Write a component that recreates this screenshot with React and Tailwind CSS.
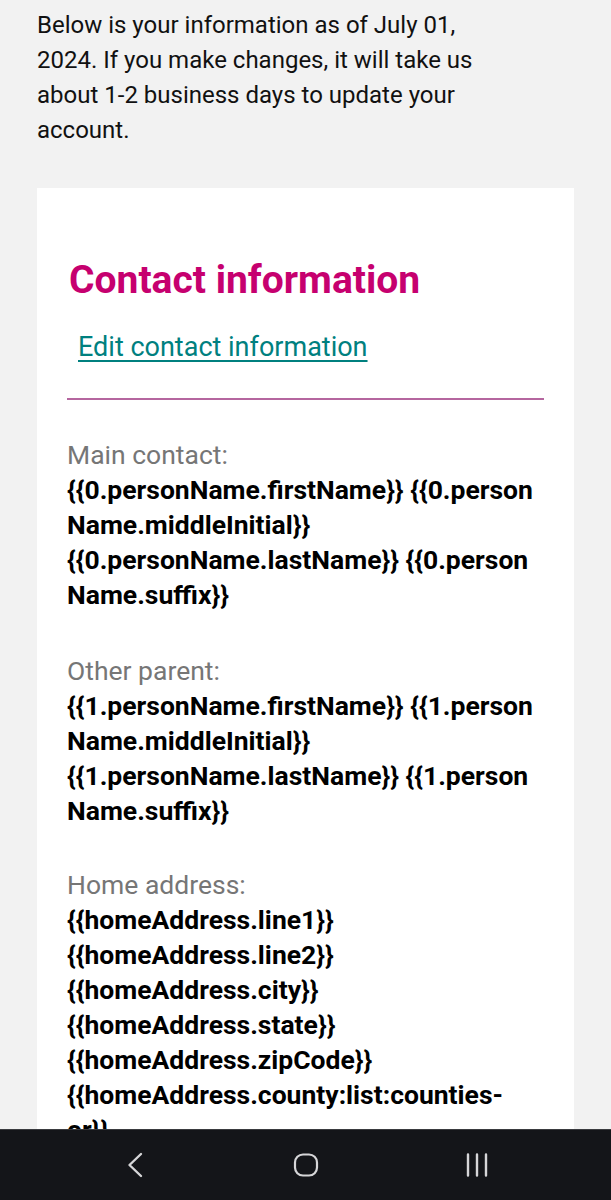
function Section({ label, children, className = '' }) {
  return (
    <div className={className}>
      <div className="text-[26.5px] leading-[35px] text-[#767676]">{label}</div>
      <div className="text-[26.5px] font-bold leading-[35px] text-black">{children}</div>
    </div>
  )
}

function NavBar() {
  return (
    <nav className="fixed inset-x-0 bottom-0 flex h-[71px] justify-center border-t border-[#3a3b3f] bg-[#141519]">
      <div className="flex w-[171px] items-center justify-center">
        <svg width="18" height="26" viewBox="0 0 18 26" fill="none">
          <path d="M15 2 L3.5 13 L15 24" stroke="#d6d6d8" strokeWidth="2.4" strokeLinecap="round" strokeLinejoin="round" />
        </svg>
      </div>
      <div className="flex w-[171px] items-center justify-center">
        <svg width="26" height="26" viewBox="0 0 26 26" fill="none">
          <rect x="2" y="2.5" width="22" height="21" rx="8" stroke="#d6d6d8" strokeWidth="2.2" />
        </svg>
      </div>
      <div className="flex w-[171px] items-center justify-center">
        <svg width="24" height="26" viewBox="0 0 24 26" fill="none">
          <path d="M3 2.5 V23.5 M12 2.5 V23.5 M21 2.5 V23.5" stroke="#d6d6d8" strokeWidth="2.4" strokeLinecap="round" />
        </svg>
      </div>
    </nav>
  )
}

export default function App() {
  return (
    <div className="min-h-screen bg-[#f2f2f2] font-['Roboto','Liberation_Sans',sans-serif]">
      <div className="px-[37px] pt-[8px]">
        <p className="max-w-[450px] text-[24px] leading-[35px] text-[#111]">
          Below is your information as of July 01, 2024. If you make changes, it will take us about 1-2 business days to update your account.
        </p>

        <section className="mt-[40px] bg-white px-[30px] pt-[71px] pb-[120px]">
          <h2 className="pl-[2px] text-[39px] font-bold leading-[43px] text-[#c6006f]">Contact information</h2>
          <a href="#" className="mt-[28px] ml-[11px] inline-block text-[27px] leading-[35px] text-[#00807f] underline decoration-[2px] underline-offset-[4px]">
            Edit contact information
          </a>
          <div className="mt-[33px] h-[2px] bg-[#b5669f]" />

          <Section label="Main contact:" className="mt-[37px]">
            <div className="break-all">{'{{0.personName.firstName}} {{0.personName.middleInitial}}'}</div>
            <div className="break-all">{'{{0.personName.lastName}} {{0.personName.suffix}}'}</div>
          </Section>

          <Section label="Other parent:" className="mt-[41px]">
            <div className="break-all">{'{{1.personName.firstName}} {{1.personName.middleInitial}}'}</div>
            <div className="break-all">{'{{1.personName.lastName}} {{1.personName.suffix}}'}</div>
          </Section>

          <Section label="Home address:" className="mt-[39px]">
            <div>{'{{homeAddress.line1}}'}</div>
            <div>{'{{homeAddress.line2}}'}</div>
            <div>{'{{homeAddress.city}}'}</div>
            <div>{'{{homeAddress.state}}'}</div>
            <div>{'{{homeAddress.zipCode}}'}</div>
            <div>
              {'{{homeAddress.county:list:counties-'}
              <br />
              {'or}}'}
            </div>
          </Section>
        </section>
      </div>
      <NavBar />
    </div>
  )
}
